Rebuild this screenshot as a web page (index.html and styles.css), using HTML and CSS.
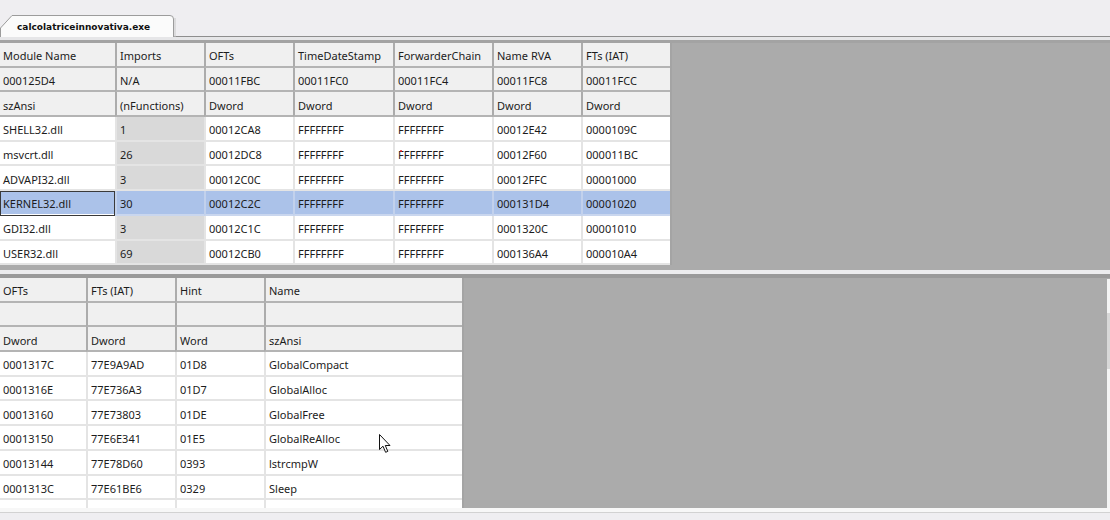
FILE: index.html
```html
<!DOCTYPE html>
<html>
<head>
<meta charset="utf-8">
<link rel="stylesheet" href="styles.css">
</head>
<body>
<div class="app">
  <div class="tabbar">
    <div class="tab">
      <svg class="tab-shape" width="176" height="22" viewBox="0 0 176 22"><path d="M0.5,22 L0.5,13 L12,0.5 L170,0.5 Q173.5,0.5 173.5,4 L173.5,22" fill="#fbfbfb" stroke="#9c9c9c"/><line x1="175" y1="3" x2="175" y2="22" stroke="#c8c8c8"/></svg>
      <span class="tab-label">calcolatriceinnovativa.exe</span>
    </div>
  </div>
  <div class="frame-edge"></div>
  <div class="pane pane-top">
    <div class="grid grid-top">
      <div class="c h">Module Name</div><div class="c h">Imports</div><div class="c h">OFTs</div><div class="c h">TimeDateStamp</div><div class="c h">ForwarderChain</div><div class="c h">Name RVA</div><div class="c h">FTs (IAT)</div>
      <div class="c h">000125D4</div><div class="c h">N/A</div><div class="c h">00011FBC</div><div class="c h">00011FC0</div><div class="c h">00011FC4</div><div class="c h">00011FC8</div><div class="c h">00011FCC</div>
      <div class="c h">szAnsi</div><div class="c h">(nFunctions)</div><div class="c h">Dword</div><div class="c h">Dword</div><div class="c h">Dword</div><div class="c h">Dword</div><div class="c h">Dword</div>

      <div class="c">SHELL32.dll</div><div class="c g">1</div><div class="c">00012CA8</div><div class="c">FFFFFFFF</div><div class="c">FFFFFFFF</div><div class="c">00012E42</div><div class="c">0000109C</div>
      <div class="c">msvcrt.dll</div><div class="c g">26</div><div class="c">00012DC8</div><div class="c">FFFFFFFF</div><div class="c mark">FFFFFFFF<span class="dot"></span></div><div class="c">00012F60</div><div class="c">000011BC</div>
      <div class="c">ADVAPI32.dll</div><div class="c g">3</div><div class="c">00012C0C</div><div class="c">FFFFFFFF</div><div class="c">FFFFFFFF</div><div class="c">00012FFC</div><div class="c">00001000</div>
      <div class="c s focus">KERNEL32.dll</div><div class="c s">30</div><div class="c s">00012C2C</div><div class="c s">FFFFFFFF</div><div class="c s">FFFFFFFF</div><div class="c s">000131D4</div><div class="c s">00001020</div>
      <div class="c">GDI32.dll</div><div class="c g">3</div><div class="c">00012C1C</div><div class="c">FFFFFFFF</div><div class="c">FFFFFFFF</div><div class="c">0001320C</div><div class="c">00001010</div>
      <div class="c">USER32.dll</div><div class="c g">69</div><div class="c">00012CB0</div><div class="c">FFFFFFFF</div><div class="c">FFFFFFFF</div><div class="c">000136A4</div><div class="c">000010A4</div>
    </div>
  </div>
  <div class="splitter"></div>
  <div class="pane pane-bottom">
    <div class="grid grid-bottom">
      <div class="c h">OFTs</div><div class="c h">FTs (IAT)</div><div class="c h">Hint</div><div class="c h">Name</div>
      <div class="c h"></div><div class="c h"></div><div class="c h"></div><div class="c h"></div>
      <div class="c h">Dword</div><div class="c h">Dword</div><div class="c h">Word</div><div class="c h">szAnsi</div>

      <div class="c">0001317C</div><div class="c">77E9A9AD</div><div class="c">01D8</div><div class="c">GlobalCompact</div>
      <div class="c">0001316E</div><div class="c">77E736A3</div><div class="c">01D7</div><div class="c">GlobalAlloc</div>
      <div class="c">00013160</div><div class="c">77E73803</div><div class="c">01DE</div><div class="c">GlobalFree</div>
      <div class="c">00013150</div><div class="c">77E6E341</div><div class="c">01E5</div><div class="c">GlobalReAlloc</div>
      <div class="c">00013144</div><div class="c">77E78D60</div><div class="c">0393</div><div class="c">lstrcmpW</div>
      <div class="c">0001313C</div><div class="c">77E61BE6</div><div class="c">0329</div><div class="c">Sleep</div>
      <div class="c"></div><div class="c"></div><div class="c"></div><div class="c"></div>
    </div>
    <div class="spacer"></div>
    <div class="scrollbar"><div class="thumb"></div></div>
  </div>
  <div class="statusbar"></div>
  <svg class="cursor" width="13" height="20" viewBox="0 0 13 20"><path d="M0.5,0.5 L0.5,15.5 L4,12.2 L6.6,18.3 L8.8,17.4 L6.3,11.5 L11,11.5 Z" fill="#ffffff" stroke="#111" stroke-width="1" stroke-linejoin="miter"/></svg>
</div>
</body>
</html>
```

FILE: styles.css
```css
html, body {
  margin: 0;
  padding: 0;
}
body {
  background: #efeef1;
  font-family: "Noto Sans", "Open Sans", sans-serif;
  font-size: 11px;
  color: #1c1c1c;
}
.app {
  position: relative;
  width: 1110px;
  height: 520px;
  overflow: hidden;
  display: flex;
  flex-direction: column;
}
.tabbar {
  border-bottom: 1px solid #8e8e8e;
  display: flex;
  align-items: flex-end;
  box-sizing: border-box;
  height: 37px;
}
.tab {
  position: relative;
  width: 176px;
  height: 22px;
  margin-bottom: -1px;
  display: flex;
  align-items: center;
}
.tab-shape {
  position: absolute;
  left: 0;
  top: 0;
}
.tab-label {
  position: relative;
  margin-left: 17px;
  margin-top: 1px;
  font-family: "DejaVu Sans", sans-serif;
  font-weight: bold;
  font-size: 9px;
  letter-spacing: 0;
  color: #111;
}
.frame-edge {
  height: 3px;
  background: #e6e6e8;
  border-bottom: 3px solid #a3a3a3;
}
.pane {
  background: #ababab;
  display: flex;
  overflow: hidden;
}
.pane-top {
  height: 227px;
}
.splitter {
  height: 4px;
  background: #ececee;
  border-bottom: 4px solid #9a9a9a;
}
.pane-bottom {
  height: 230px;
}
.spacer {
  flex: 1;
}
.grid {
  display: grid;
  grid-auto-rows: 24.7px;
  align-content: start;
  border-right: 2px solid #a4a4a4;
  background: #ffffff;
  align-self: flex-start;
}
.grid-top {
  grid-template-columns: 115px 89px 89px 100px 99px 89px 89px;
}
.grid-bottom {
  grid-template-columns: 86px 89px 89px 198px;
}
.c {
  box-sizing: border-box;
  display: flex;
  align-items: center;
  padding-left: 3px;
  padding-top: 3px;
  white-space: nowrap;
  overflow: hidden;
  background: #ffffff;
  border-left: 2px solid #e4e4e4;
  border-bottom: 2px solid #e4e4e4;
}
.grid-top .c:nth-child(7n+1),
.grid-bottom .c:nth-child(4n+1) {
  border-left: none;
}
.c.h {
  background: #f0f0f0;
  border-left-color: #acacac;
  border-bottom-color: #b4b4b4;
}
.c.g {
  background: #d9d9d9;
}
.c.s {
  background: #abc2e9;
  border-bottom-color: #c9d6ee;
  border-left-color: #c2d1ec;
}
.c.focus {
  outline: 1px solid #3a3a3a;
  outline-offset: -1px;
  border-bottom-color: #ffffff;
}
.c.mark {
  position: relative;
}
.dot {
  position: absolute;
  left: 5px;
  top: 8px;
  width: 2px;
  height: 2px;
  border-radius: 1px;
  background: #e02020;
}
.scrollbar {
  width: 3px;
  margin-top: 1px;
  background: #f4f4f4;
  display: flex;
  flex-direction: column;
}
.thumb {
  margin-top: 34px;
  height: 56px;
  background: #d8d8d8;
}
.statusbar {
  flex: 1;
  border-top: 4px solid #f7f7f7;
  box-sizing: border-box;
  position: relative;
}
.statusbar::before {
  content: "";
  display: block;
  height: 1px;
  background: #d2d2d2;
}
.cursor {
  position: absolute;
  left: 379px;
  top: 434px;
}
```
